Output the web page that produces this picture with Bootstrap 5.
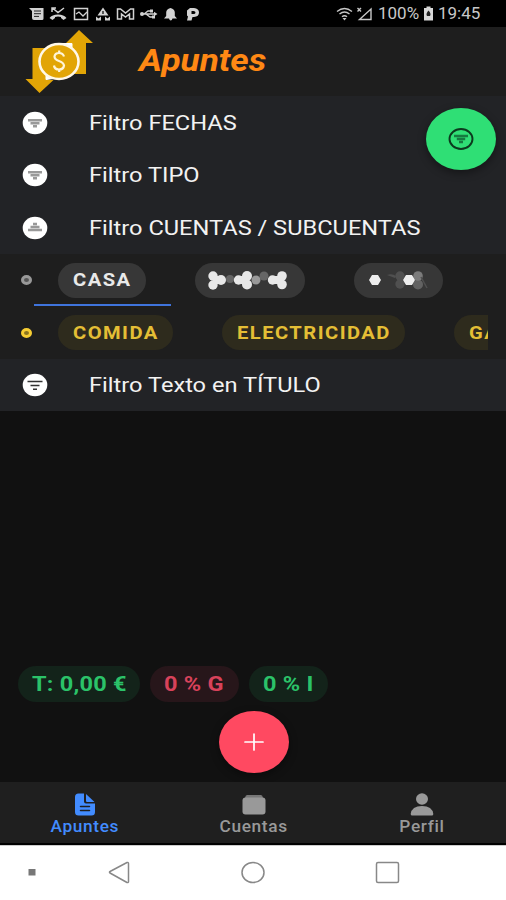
<!DOCTYPE html>
<html lang="es" data-bs-theme="dark">
<head>
<meta charset="utf-8">
<meta name="viewport" content="width=device-width, initial-scale=1">
<title>Apuntes</title>
<link href="https://cdn.jsdelivr.net/npm/bootstrap@5.3.0/dist/css/bootstrap.min.css" rel="stylesheet">
<style>
body{font-family:Roboto,"Liberation Sans",sans-serif;background:#111;height:900px;overflow:hidden;color:#f2f2f2}
svg{display:block;flex:none}
.wide{display:inline-block;transform:scaleX(1.12);transform-origin:left center;white-space:nowrap;line-height:1}
.statusbar{height:27px;background:#000;color:#c8c8c8;padding-left:28px;font-size:16.5px}
.statusbar .wide{transform:scaleX(1.03);margin-top:5px}
.pct{width:45px}
.clock{width:68px;margin-left:4px}
.appbar{height:69px;background:#1e1e1e;padding-left:24px}
.title{font-size:31px;font-weight:700;font-style:italic;color:#ff8814;margin:-3px 0 0 45px}
.title.wide{transform:scaleX(1.135)}
.filter-item{height:52.5px;background:#222326;padding:1px 0 0 22px;font-size:21px;gap:41px}
.filter-item .wide{margin-top:1px;transform:scaleX(1.125)}
.strip{height:52.5px;background:#1e1e1e;padding-left:21px}
.dot{width:11px;height:10px;border-radius:50%;border:3px solid #999;background:#555;flex:none;margin-top:1px}
.dot.gold{border-color:#f6cd33;background:#8a7420}
.tag{height:35px;border-radius:18px;flex:none;padding:0 0 0 15px;display:flex;align-items:center;font-size:18px;font-weight:700;letter-spacing:1.3px;background:#373737;color:#e9e9e9;margin-top:1px}
.tag.gold{background:#2e2b1d;color:#e4be35}
.w-casa{width:88px}.w-b{width:110px}.w-c{width:89px}
.w-com{width:115px}.w-ele{width:183px}.w-ga{width:34px;border-radius:18px 0 0 18px;overflow:hidden}
.tabline{height:2px;width:137px;left:34px;bottom:0;background:#3f74dc}
.sum{height:36px;border-radius:18px;padding-left:14px;display:flex;align-items:center;font-size:21px;font-weight:700;letter-spacing:.2px}
.sum.ok{background:#13231a;color:#2bc269}
.sum.bad{background:#27161a;color:#d8425a}
.fab{width:70px;height:62px;border-radius:50%;display:flex;align-items:center;justify-content:center}
.fab-top{right:10px;top:107.5px;background:#2fdf75;box-shadow:0 3px 9px rgba(0,0,0,.4)}
.fab-add{background:#ff4961;box-shadow:0 3px 8px rgba(0,0,0,.4)}
.tabs-bottom{height:61px;background:#1f1f1f;font-size:16px;font-weight:500;letter-spacing:.6px;color:#999}
.tabs-bottom .col{padding:11px 0 0 1px}
.tabs-bottom .wide{transform:scaleX(1.08);transform-origin:center;margin-top:3px}
.tabs-bottom .on{color:#428cff}
.sysnav{height:57px;background:#fff;border-top:2px solid #000;box-shadow:inset 0 1px #ccc;padding-left:28px}
</style>
<script src="https://cdn.jsdelivr.net/npm/bootstrap@5.3.0/dist/js/bootstrap.bundle.min.js"></script>
</head>
<body class="d-flex flex-column position-relative m-0">
<div class="statusbar d-flex align-items-center">
  <svg width="172" height="27" viewBox="0 0 172 27" fill="#d2d2d2">
    <path d="M1 8h14.500v10.500q0 1.500-1.500 1.500H6q-2 0-2-2V11Z"/><path d="M6 11h7M6 13.700h7M6 16.400h5" stroke="#222" stroke-width="1"/>
    <path d="M24.500 8l5.500 4.500L36 8M24 12V8h4" fill="none" stroke="#d2d2d2" stroke-width="1.500"/><path d="M21.500 18q2.500-3.500 8.500-3.500t8.500 3.500l-3 2-2.500-2v-1q-3-.800-6 0v1l-2.500 2Z"/>
    <rect x="46.500" y="8.500" width="13" height="11" fill="none" stroke="#d2d2d2" stroke-width="1.500"/><path d="M48 14l3-2 4 4 4-4" fill="none" stroke="#d2d2d2" stroke-width="1.300"/>
    <path d="M75 7.500l5.500 8h-11ZM68 20.500v-4l2.500 2 2.500-2v4M77 20.500v-4l2.500 2 2.500-2v4"/><path d="M75 11v3" stroke="#111" stroke-width="1.300"/>
    <path d="M89.500 19V9h3l5 4 5-4h3v10h-4v-5l-4 3-4-3v5Z" fill="none" stroke="#d2d2d2" stroke-width="1.500"/>
    <path d="M113 14h15M116 14l4-3h3M118 14l4 3h3" fill="none" stroke="#d2d2d2" stroke-width="1.300"/><circle cx="114" cy="14" r="2"/><path d="M126 11.800l3.500 2.200-3.500 2.200ZM122 9.500h3v3h-3ZM124 15.500h3v3h-3Z"/>
    <path d="M136 18.500l2.200-2.500v-3.500q0-3.500 4.300-4.500 4.300 1 4.300 4.500V16l2.200 2.500ZM141 18.500h3.500q-.500 2-1.750 2T141 18.500Z"/>
    <path fill-rule="evenodd" d="M162 8h4q5 .500 5 4.500t-5 4.500h-1.500l-1 3.500H159l1-4-1-1V10.500Zm1.500 3v3h2q2 0 2-1.500t-2-1.500Z"/>
  </svg>
  <svg class="ms-auto" width="38" height="27" viewBox="0 0 38 27" fill="none" stroke="#c8c8c8" stroke-width="1.400"><path d="M1 11.500q7.500-6 15 0M3.500 14q5-4 10 0M6 16.700q2.500-2 5 0"/><path d="M6.500 18h4l-2 2.500Z" fill="#c8c8c8" stroke="none"/><path d="M23.500 19.500L35 9v10.500ZM21.500 8l3.500 3.500M25 8l-3.500 3.500"/></svg>
  <span class="pct ms-1"><span class="wide">100%</span></span>
  <svg width="11" height="27" viewBox="0 0 11 27"><path d="M3.500 6.500h4V8H10v12.500H1V8h2.500Z" fill="#d8d8d8"/><path d="M5.500 10.500q3 3 1.500 5.500H4q-1.500-2.500 1.500-5.500Z" fill="#222"/></svg>
  <span class="clock"><span class="wide">19:45</span></span>
</div>

<header class="appbar d-flex align-items-center">
  <svg width="70" height="69" viewBox="0 0 70 69">
    <path d="M8.500 21H40L28 48l-5 5h-7.500 14L15.500 66 1.500 52h7ZM55 3l14 13h-7v31H40L32 24l10-8v0Z" fill="#e2a506"/>
    <path d="M36 16.500h12v7ZM34 51l-12 1.500V44Z" fill="#fff" stroke="#fff"/>
    <ellipse cx="35" cy="34.500" rx="19.500" ry="17.500" fill="#e2a506" stroke="#fff8e8" stroke-width="2.600"/>
    <path d="M40 29.500q-1-3.500-5-3.500t-4.500 3.500q0 3 4.500 4.500t5 4.500q-.500 4-5 4t-5-4M35.200 23.500v3M35.200 42v3" fill="none" stroke="#fff5da" stroke-width="2.200"/>
  </svg>
  <span class="wide title">Apuntes</span>
</header>

<main class="flex-grow-1 d-flex flex-column">
  <div class="filter-item d-flex align-items-center"><svg width="26" height="24" viewBox="0 0 26 24"><ellipse cx="13" cy="12" rx="12.300" ry="11.200" fill="#fff"/><path d="M6 9.200h14M8.500 12.200h9M11 15.200h4" stroke="#999" stroke-width="2.500"/></svg><span class="wide">Filtro FECHAS</span></div>
  <div class="filter-item d-flex align-items-center"><svg width="26" height="24" viewBox="0 0 26 24"><ellipse cx="13" cy="12" rx="12.300" ry="11.200" fill="#fff"/><path d="M6 9.200h14M8.500 12.200h9M11 15.200h4" stroke="#999" stroke-width="2.500"/></svg><span class="wide">Filtro TIPO</span></div>
  <div class="filter-item d-flex align-items-center"><svg width="26" height="24" viewBox="0 0 26 24"><ellipse cx="13" cy="12" rx="12.300" ry="11.200" fill="#fff"/><path d="M6 14h14M8.500 11h9M11 8h4" stroke="#999" stroke-width="2.500"/></svg><span class="wide">Filtro CUENTAS / SUBCUENTAS</span></div>

  <div class="strip d-flex align-items-center position-relative">
    <span class="dot"></span>
    <span class="tag w-casa" style="margin-left:26px"><span class="wide">CASA</span></span>
    <span class="tag w-b p-0" style="margin-left:49px"><svg width="110" height="35" viewBox="0 0 110 35">
      <g fill="#666"><circle cx="35" cy="16" r="4"/><circle cx="69" cy="13" r="4.500"/></g><circle cx="61" cy="17" r="4.500" fill="#999"/>
      <g fill="#e8e8e8"><circle cx="18" cy="13" r="4.700"/><circle cx="18" cy="22" r="4.700"/><circle cx="26" cy="17" r="5"/><circle cx="43.500" cy="17" r="4.700"/><circle cx="52" cy="13" r="5"/><circle cx="52" cy="21.500" r="5"/><circle cx="77.500" cy="17" r="4.700"/><circle cx="87" cy="13" r="4.800"/><circle cx="87" cy="21.500" r="4.800"/><path d="M18 13h8v8h-8ZM45 13h8v8h-8ZM79 13h8v8h-8Z"/></g></svg></span>
    <span class="tag w-c p-0" style="margin-left:49px"><svg width="89" height="35" viewBox="0 0 89 35">
      <g fill="#505050"><circle cx="46" cy="13" r="4.700"/><circle cx="46" cy="21" r="4.700"/><path d="M33 12q5-2 9 1l-1 2Z"/></g><circle cx="64" cy="21.500" r="5" fill="#626262"/><circle cx="64" cy="13" r="4.800" fill="#7b7b7b"/><path d="M67 14l6 11" stroke="#505050" stroke-width="1.500"/>
      <path d="M15 17l3-5h6l3 5-3 5h-6ZM49 17l3-5h6l3 5-3 5h-6Z" fill="#ededed"/></svg></span>
    <div class="tabline position-absolute"></div>
  </div>
  <div class="strip d-flex align-items-center">
    <span class="dot gold"></span>
    <span class="tag gold w-com" style="margin-left:26px"><span class="wide">COMIDA</span></span>
    <span class="tag gold w-ele" style="margin-left:49px"><span class="wide">ELECTRICIDAD</span></span>
    <span class="tag gold w-ga" style="margin-left:49px"><span class="wide">GA</span></span>
  </div>
  <div class="filter-item d-flex align-items-center"><svg width="26" height="24" viewBox="0 0 26 24"><ellipse cx="13" cy="12" rx="12.300" ry="11.200" fill="#fff"/><path d="M5.500 8.500h15M8.500 12.500h9M11 16.300h4" stroke="#333" stroke-width="1.500"/></svg><span class="wide">Filtro Texto en TÍTULO</span></div>

  <div class="mt-auto d-flex" style="padding-left:18px;gap:10px;margin-bottom:9px">
    <span class="sum ok" style="width:122px"><span class="wide">T: 0,00 €</span></span>
    <span class="sum bad" style="width:89px"><span class="wide">0 % G</span></span>
    <span class="sum ok" style="width:79px"><span class="wide">0 % I</span></span>
  </div>
  <div class="d-flex justify-content-center" style="padding-left:2px;margin-bottom:9px">
    <div class="fab fab-add"><svg width="20" height="18" viewBox="0 0 20 18"><path d="M1 9h18M10 1v16" stroke="#fff" stroke-width="1.700" stroke-linecap="round"/></svg></div>
  </div>
</main>

<nav class="tabs-bottom d-flex text-center">
  <div class="col d-flex flex-column align-items-center on"><svg width="22" height="23" viewBox="0 0 22 23"><path d="M4.500.500H10v8q0 2 2 2h9V19q0 3.500-3.500 3.500h-13Q1 22.500 1 19V4Q1 .500 4.500.500ZM12 1l8.500 8H13q-1 0-1-1Z" fill="#428cff"/><path d="M6.500 13.500h9M6.500 17.500h9" stroke="#1f1f1f" stroke-width="1.500" stroke-linecap="round"/></svg><span class="wide">Apuntes</span></div>
  <div class="col d-flex flex-column align-items-center"><svg width="24" height="23" viewBox="0 0 24 23"><path d="M5 2h14q1.500 0 2 3H3q.500-3 2-3Z" fill="#777"/><rect x=".500" y="4.500" width="23" height="17" rx="3" fill="#999"/></svg><span class="wide">Cuentas</span></div>
  <div class="col d-flex flex-column align-items-center"><svg width="24" height="23" viewBox="0 0 24 23" fill="#999"><ellipse cx="12" cy="6" rx="6" ry="5.700"/><path d="M.700 21q1-8 11.300-8t11.300 8q0 1.500-1.500 1.500H2.200Q.700 22.500.700 21Z"/></svg><span class="wide">Perfil</span></div>
</nav>
<div class="sysnav">
  <svg width="400" height="55" viewBox="0 0 400 55" fill="none" stroke="#888" stroke-width="1.500" stroke-linejoin="round"><path d="M.500 24h7v6.500h-7Z" fill="#777" stroke="none"/><path d="M82 26.500q-1 .500 0 1.500l17 9.500q1.500.500 1.500-1V18.500q0-1.500-1.500-1Z"/><ellipse cx="225" cy="27.500" rx="11" ry="10"/><rect x="348.500" y="17.500" width="22" height="20" rx="1.500"/></svg>
</div>

<div class="fab fab-top position-absolute"><svg width="26" height="24" viewBox="0 0 26 24" fill="none"><ellipse cx="13" cy="12" rx="11.500" ry="10" stroke="#0c3a1e" stroke-width="1.900"/><path d="M6 9h14M8.800 12h8.400M11 15h4" stroke="#167a40" stroke-width="2.400"/></svg></div>
</body>
</html>
